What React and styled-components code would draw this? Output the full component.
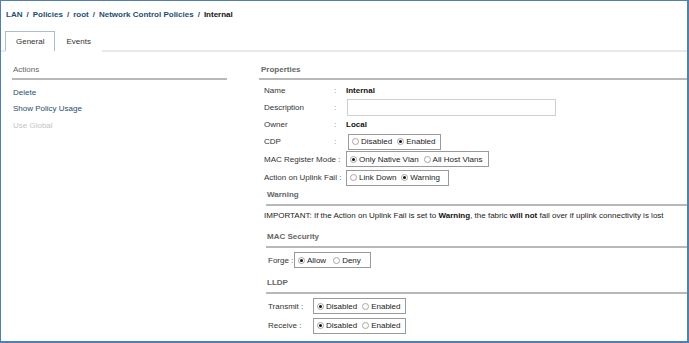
import React from 'react'
import styled, { createGlobalStyle } from 'styled-components'

const Global = createGlobalStyle`
  html, body {
    margin: 0;
    padding: 0;
    background: #fff;
  }
  body {
    font-family: "Liberation Sans", Arial, sans-serif;
    font-size: 8px;
    color: #222;
  }
`

const Frame = styled.div`
  width: 689px;
  height: 343px;
  box-sizing: border-box;
  border-style: solid;
  border-color: #4f7fb3;
  border-width: 1px 2px 2px 1px;
  overflow: hidden;
  display: flex;
  flex-direction: column;
`

const Crumbs = styled.div`
  height: 27px;
  flex-shrink: 0;
  padding-left: 5px;
  display: flex;
  align-items: center;
  gap: 4px;
  font-weight: bold;
  color: #1e4f6f;
`

const Crumb = styled.span`
  color: ${p => (p.current ? '#111' : '#1e4f6f')};
`

const TabBar = styled.div`
  height: 22px;
  flex-shrink: 0;
  display: flex;
  align-items: flex-end;
  padding-left: 4px;
  border-bottom: 2px solid #e9e9e9;
`

const Tab = styled.div`
  height: 21px;
  box-sizing: border-box;
  padding: 0 10px;
  display: flex;
  align-items: center;
  margin-bottom: -2px;
  color: #333;
  border: 1px solid ${p => (p.active ? '#a8bfd3' : 'transparent')};
  border-bottom: 2px solid ${p => (p.active ? '#fff' : 'transparent')};
  background: #fff;
`

const Body = styled.div`
  flex: 1;
  display: grid;
  grid-template-columns: 226px 1fr;
  column-gap: 32px;
  padding-top: 10px;
`

const Pane = styled.div`
  display: flex;
  flex-direction: column;
  padding-left: ${p => p.pad || 0}px;
`

const SectionHead = styled.div`
  height: 14px;
  flex-shrink: 0;
  display: flex;
  align-items: center;
  padding: 0 0 2px ${p => p.indent || 1}px;
  color: #666;
  font-weight: ${p => (p.bold ? 'bold' : 'normal')};
  border-bottom: 2px solid #b8b8b8;
`

const Links = styled.div`
  display: flex;
  flex-direction: column;
  padding-top: 4px;
`

const ActionLink = styled.div`
  height: 16.5px;
  display: flex;
  align-items: center;
  padding-left: 1px;
  color: ${p => (p.disabled ? '#c4c4c4' : '#1e4f6f')};
`

const Props = styled.div`
  display: flex;
  flex-direction: column;
  padding: 2px 0 0 5px;
`

const Row = styled.div`
  height: ${p => p.h || 17}px;
  box-sizing: border-box;
  flex-shrink: 0;
  display: flex;
  align-items: center;
  padding-left: ${p => p.pl || 0}px;
  padding-bottom: ${p => p.pb || 0}px;
`

const Label = styled.div`
  width: ${p => p.w || 70}px;
  white-space: nowrap;
  color: #333;
  flex-shrink: 0;
`

const Colon = styled.span`
  width: 12px;
  color: #777;
  flex-shrink: 0;
`

const Value = styled.span`
  font-weight: bold;
  color: #111;
`

const Input = styled.div`
  width: 209px;
  height: 17px;
  box-sizing: border-box;
  border: 1px solid #cfcfcf;
  margin-left: 1px;
`

const Group = styled.div`
  height: 16px;
  box-sizing: border-box;
  border: 1px solid #9a9a9a;
  display: flex;
  align-items: center;
  gap: ${p => p.gap || 5}px;
  padding: 0 ${p => p.pr || 6}px 0 3px;
  margin-left: ${p => p.ml || 0}px;
  white-space: nowrap;
`

const Option = styled.span`
  display: flex;
  align-items: center;
  gap: 2px;
  color: #222;
`

const Dot = styled.span`
  width: 7px;
  height: 7px;
  box-sizing: border-box;
  border-radius: 50%;
  border: 1px solid #a5a5a5;
  background: #fff;
  display: flex;
  align-items: center;
  justify-content: center;
  &::after {
    content: '';
    width: 3px;
    height: 3px;
    border-radius: 50%;
    background: ${p => (p.on ? '#111' : 'transparent')};
  }
`

const Sub = styled.div`
  display: flex;
  flex-direction: column;
  margin-left: 7px;
`

const Note = styled.div`
  height: 24px;
  box-sizing: border-box;
  flex-shrink: 0;
  display: flex;
  align-items: center;
  padding-bottom: 4px;
  margin-left: -2px;
  white-space: nowrap;
  color: #222;
  b {
    color: #111;
  }
`

const Radios = ({ options, value, ml, gap, pr }) => (
  <Group ml={ml} gap={gap} pr={pr}>
    {options.map(o => (
      <Option key={o}>
        <Dot on={o === value} />
        {o}
      </Option>
    ))}
  </Group>
)

export default function App() {
  return (
    <>
      <Global />
      <Frame>
        <Crumbs>
          <Crumb>LAN</Crumb>/<Crumb>Policies</Crumb>/<Crumb>root</Crumb>/
          <Crumb>Network Control Policies</Crumb>/<Crumb current>Internal</Crumb>
        </Crumbs>
        <TabBar>
          <Tab active>General</Tab>
          <Tab>Events</Tab>
        </TabBar>
        <Body>
          <Pane pad={11}>
            <SectionHead>Actions</SectionHead>
            <Links>
              <ActionLink>Delete</ActionLink>
              <ActionLink>Show Policy Usage</ActionLink>
              <ActionLink disabled>Use Global</ActionLink>
            </Links>
          </Pane>
          <Pane>
            <SectionHead indent={2} bold>Properties</SectionHead>
            <Props>
              <Row>
                <Label>Name</Label><Colon>:</Colon><Value>Internal</Value>
              </Row>
              <Row>
                <Label>Description</Label><Colon>:</Colon><Input />
              </Row>
              <Row>
                <Label>Owner</Label><Colon>:</Colon><Value>Local</Value>
              </Row>
              <Row>
                <Label>CDP</Label><Colon>:</Colon>
                <Radios ml={2} pr={4} options={['Disabled', 'Enabled']} value="Enabled" />
              </Row>
              <Row h={18}>
                <Label w={79}>MAC Register Mode :</Label>
                <Radios ml={3} options={['Only Native Vlan', 'All Host Vlans']} value="Only Native Vlan" />
              </Row>
              <Row h={19.5}>
                <Label w={79}>Action on Uplink Fail :</Label>
                <Radios ml={3} pr={8} options={['Link Down', 'Warning']} value="Warning" />
              </Row>
            </Props>
            <Sub>
              <SectionHead bold>Warning</SectionHead>
              <Note>
                IMPORTANT: If the Action on Uplink Fail is set to&nbsp;<b>Warning</b>, the fabric&nbsp;<b>will not</b>&nbsp;fail over if uplink connectivity is lost
              </Note>
              <SectionHead bold>MAC Security</SectionHead>
              <Row h={28} pl={2} pb={3}>
                <Label w={26}>Forge :</Label>
                <Radios gap={7} pr={9} options={['Allow', 'Deny']} value="Allow" />
              </Row>
              <SectionHead bold>LLDP</SectionHead>
              <Row h={26} pl={2} pb={1}>
                <Label w={45}>Transmit :</Label>
                <Radios pr={4} options={['Disabled', 'Enabled']} value="Disabled" />
              </Row>
              <Row h={12} pl={2}>
                <Label w={45}>Receive :</Label>
                <Radios pr={4} options={['Disabled', 'Enabled']} value="Disabled" />
              </Row>
            </Sub>
          </Pane>
        </Body>
      </Frame>
    </>
  )
}
